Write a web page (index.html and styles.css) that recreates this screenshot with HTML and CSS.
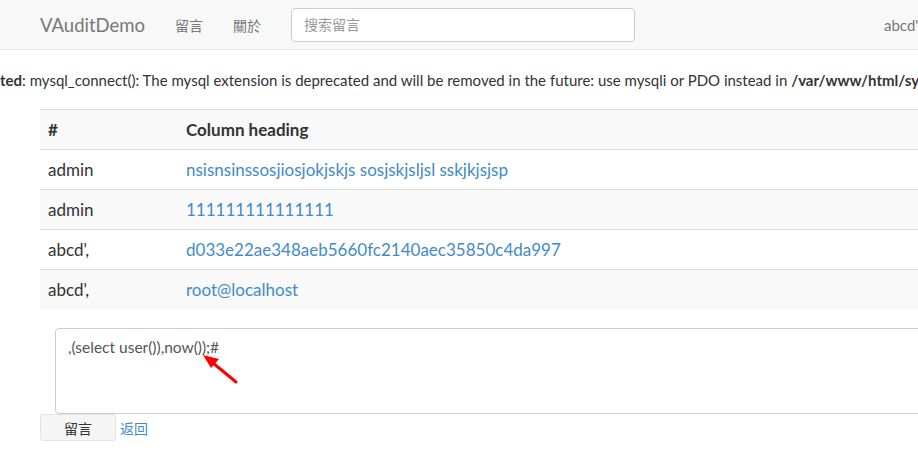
FILE: index.html
```html
<!DOCTYPE html>
<html>
<head>
<meta charset="utf-8">
<link rel="stylesheet" href="styles.css">
</head>
<body>
<div class="page">
  <nav class="navbar">
    <a class="brand">VAuditDemo</a>
    <a class="nav-link">留言</a>
    <a class="nav-link">關於</a>
    <div class="search">搜索留言</div>
    <span class="user">abcd'</span>
  </nav>
  <p class="warning"><b>ted</b>: mysql_connect(): The mysql extension is deprecated and will be removed in the future: use mysqli or PDO instead in <b>/var/www/html/sys</b></p>
  <table class="table">
    <thead>
      <tr class="striped"><th class="c1">#</th><th>Column heading</th></tr>
    </thead>
    <tbody>
      <tr><td class="c1">admin</td><td><a>nsisnsinssosjiosjokjskjs sosjskjsljsl sskjkjsjsp</a></td></tr>
      <tr class="striped"><td class="c1">admin</td><td><a>111111111111111</a></td></tr>
      <tr><td class="c1">abcd',</td><td><a>d033e22ae348aeb5660fc2140aec35850c4da997</a></td></tr>
      <tr class="striped"><td class="c1">abcd',</td><td><a>root@localhost</a></td></tr>
    </tbody>
  </table>
  <div class="form">
    <div class="textarea">,(select user()),now());#
      <svg class="arrow" width="50" height="40" viewBox="0 0 50 40">
        <line x1="43" y1="35" x2="20" y2="16" stroke="#f00" stroke-width="3" stroke-linecap="round"/>
        <polygon points="10,8 26,12 18,21" fill="#f00"/>
      </svg>
    </div>
    <div class="actions">
      <button class="btn">留言</button>
      <a class="back">返回</a>
    </div>
  </div>
</div>
</body>
</html>
```
FILE: styles.css
```css
html, body {
  margin: 0;
  padding: 0;
  overflow: hidden;
  background: #fff;
}
body {
  font-family: Lato, "Noto Sans CJK SC", sans-serif;
  font-size: 16px;
  color: #333;
}
.page {
  width: 1200px;
}
.navbar {
  height: 49px;
  background: #f8f8f8;
  border-bottom: 1px solid #e7e7e7;
  display: flex;
  align-items: center;
  padding-left: 40px;
  color: #777;
}
.brand {
  font-size: 18.5px;
  margin-right: 30px;
}
.nav-link {
  font-size: 14px;
  margin-right: 30px;
}
.search {
  box-sizing: border-box;
  width: 344px;
  height: 34px;
  border: 1px solid #ccc;
  border-radius: 4px;
  background: #fff;
  color: #999;
  font-size: 14px;
  line-height: 32px;
  padding-left: 12px;
  margin-top: 1px;
}
.user {
  font-size: 15px;
  margin-left: 249px;
}
.warning {
  margin: 0;
  height: 59px;
  line-height: 60px;
  white-space: nowrap;
  font-size: 15px;
}
.table {
  margin-left: 40px;
  width: 1100px;
  border-collapse: collapse;
  border-top: 1px solid #ddd;
  font-size: 17px;
}
.table th, .table td {
  text-align: left;
  padding: 8px;
  line-height: 22px;
  height: 23px;
  border-top: 1px solid #ddd;
}
.table th {
  font-weight: bold;
}
.table .c1 {
  width: 122px;
}
.table tr.striped {
  background: #f9f9f9;
}
.table a {
  color: #428bca;
}
.form {
  margin-top: 19px;
  margin-left: 40px;
}
.textarea {
  position: relative;
  box-sizing: border-box;
  margin-left: 15px;
  height: 86px;
  width: 1000px;
  border: 1px solid #ccc;
  border-radius: 4px;
  padding: 8px 12px;
  font-size: 15.5px;
  line-height: 20px;
  color: #555;
}
.arrow {
  position: absolute;
  left: 137px;
  top: 18px;
}
.actions {
  display: flex;
  align-items: center;
  gap: 4px;
}
.btn {
  box-sizing: border-box;
  width: 76px;
  height: 27px;
  background: #f5f5f5;
  border: 1px solid #e3e3e3;
  border-radius: 3px;
  font-family: "Noto Sans CJK SC", sans-serif;
  font-size: 14px;
  color: #333;
  padding: 0;
}
.back {
  color: #428bca;
  font-size: 14px;
}
```
